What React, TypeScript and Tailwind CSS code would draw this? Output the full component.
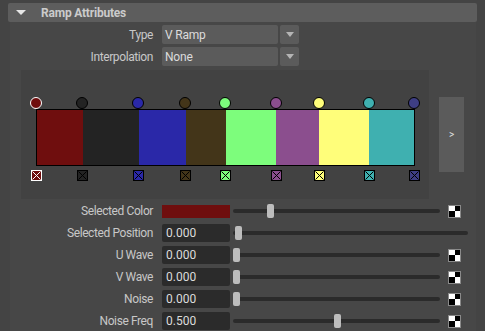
import React from 'react';

type Stop = { pos: number; color: string };

const stops: Stop[] = [
  { pos: 0, color: '#6f0e0e' },
  { pos: 46, color: '#232323' },
  { pos: 102, color: '#2a28a8' },
  { pos: 149, color: '#433519' },
  { pos: 189, color: '#7dfd7c' },
  { pos: 240, color: '#8b4e8e' },
  { pos: 283, color: '#fffe7a' },
  { pos: 333, color: '#3fb0b0' },
  { pos: 378, color: '#3e3e84' },
];

const font = { fontFamily: 'Roboto, "Liberation Sans", sans-serif' };

const Checker = () => (
  <div className="grid h-[13px] w-[13px] grid-cols-2 border border-[#8a8a8a]">
    <div className="bg-white" />
    <div className="bg-black" />
    <div className="bg-black" />
    <div className="bg-white" />
  </div>
);

const Slider = ({ width, left }: { width: number; left: number }) => (
  <div className="relative flex h-[14px] items-center" style={{ width }}>
    <div className="h-[4px] w-full rounded-full bg-[#2b2b2b]" />
    <div
      className="absolute top-0 h-[14px] w-[7px] rounded-[2px] bg-[#bdbdbd]"
      style={{ left }}
    />
  </div>
);

const Dropdown = ({ value }: { value: string }) => (
  <div className="flex h-[19px] items-stretch gap-[2px]">
    <div className="flex w-[116px] items-center rounded-[2px] bg-[#5b5b5b] pl-[3px] text-[12px] tracking-[-0.2px] text-[#dcdcdc]">
      {value}
    </div>
    <div className="flex w-[19px] items-center justify-center rounded-[2px] bg-[#5b5b5b]">
      <svg width="8" height="5" viewBox="0 0 8 5">
        <path d="M0 0h8L4 5z" fill="#b4b4b4" />
      </svg>
    </div>
  </div>
);

const Label = ({ text }: { text: string }) => (
  <div className="w-[143px] shrink-0 text-right text-[12px] tracking-[-0.4px] text-[#c8c8c8]">{text}</div>
);

const NumRow = ({ label, value, handle, checker = true, track = 207 }: {
  label: string; value: string; handle: number; checker?: boolean; track?: number;
}) => (
  <div className="flex h-[22px] items-center">
    <Label text={label} />
    <div className="ml-[9px] flex h-[18px] w-[68px] items-center rounded-[2px] bg-[#2b2b2b] pl-[4px] text-[12px] text-[#dcdcdc]">
      {value}
    </div>
    <div className="ml-[3px]">
      <Slider width={track} left={handle} />
    </div>
    {checker && (
      <div className="ml-[8px]">
        <Checker />
      </div>
    )}
  </div>
);

const Ramp = () => {
  const width = 379;
  return (
    <div className="relative ml-[15px] mt-[27px] h-[84px]" style={{ width }}>
      {stops.map((s, i) => (
        <div
          key={'c' + i}
          className={`absolute top-0 h-[12px] w-[12px] rounded-full border ${i === 0 ? 'border-white' : 'border-black'}`}
          style={{ left: s.pos - 6, backgroundColor: s.color }}
        />
      ))}
      <div className="absolute left-0 top-[12px] flex h-[57px] w-full border border-black">
        {stops.slice(0, -1).map((s, i) => (
          <div
            key={'s' + i}
            className="h-full"
            style={{ width: stops[i + 1].pos - s.pos, backgroundColor: s.color }}
          />
        ))}
      </div>
      {stops.map((s, i) => (
        <div
          key={'q' + i}
          className={`absolute top-[73px] h-[11px] w-[11px] border ${i === 0 ? 'border-white' : 'border-black'}`}
          style={{ left: s.pos - 5, backgroundColor: s.color }}
        >
          <svg width="9" height="9" viewBox="0 0 9 9" className="block">
            <path d="M0.5 0.5L8.5 8.5M8.5 0.5L0.5 8.5" stroke={i === 0 ? '#fff' : '#000'} strokeWidth="1" />
          </svg>
        </div>
      ))}
    </div>
  );
};

export default function App() {
  return (
    <div className="h-[331px] w-[485px] overflow-hidden bg-[#444444]" style={font}>
      <div className="mx-[8px] mt-[3px] flex h-[19px] items-center rounded-[2px] bg-[#5d5d5d]">
        <svg width="10" height="5" viewBox="0 0 10 5" className="ml-[8px]">
          <path d="M0 0h10L5 5z" fill="#e6e6e6" />
        </svg>
        <span className="ml-[15px] text-[12px] font-bold tracking-[-0.2px] text-[#cbcbcb]">Ramp Attributes</span>
      </div>
      <div className="ml-[10px] flex h-[309px] w-[466px] flex-col bg-[#474747]">
        <div className="mt-[3px] flex flex-col gap-[3px]">
          <div className="flex items-center">
            <Label text="Type" />
            <div className="ml-[9px]"><Dropdown value="V Ramp" /></div>
          </div>
          <div className="flex items-center">
            <Label text="Interpolation" />
            <div className="ml-[9px]"><Dropdown value="None" /></div>
          </div>
        </div>
        <div className="mt-[4px] flex">
          <div className="ml-[11px] h-[129px] w-[408px] bg-[#424242]">
            <Ramp />
          </div>
          <div className="ml-[10px] mt-[27px] flex h-[75px] w-[25px] items-center justify-center bg-[#5b5b5b] text-[10px] text-[#e0e0e0]">
            &gt;
          </div>
        </div>
        <div className="mt-[1px] flex flex-col">
          <div className="flex h-[22px] items-center">
            <Label text="Selected Color" />
            <div className="ml-[9px] h-[13px] w-[68px] bg-[#6f0e0e]" />
            <div className="ml-[3px]">
              <Slider width={207} left={34} />
            </div>
            <div className="ml-[8px]">
              <Checker />
            </div>
          </div>
          <NumRow label="Selected Position" value="0.000" handle={2} checker={false} track={235} />
          <NumRow label="U Wave" value="0.000" handle={0} />
          <NumRow label="V Wave" value="0.000" handle={0} />
          <NumRow label="Noise" value="0.000" handle={0} />
          <NumRow label="Noise Freq" value="0.500" handle={101} />
        </div>
      </div>
    </div>
  );
}
